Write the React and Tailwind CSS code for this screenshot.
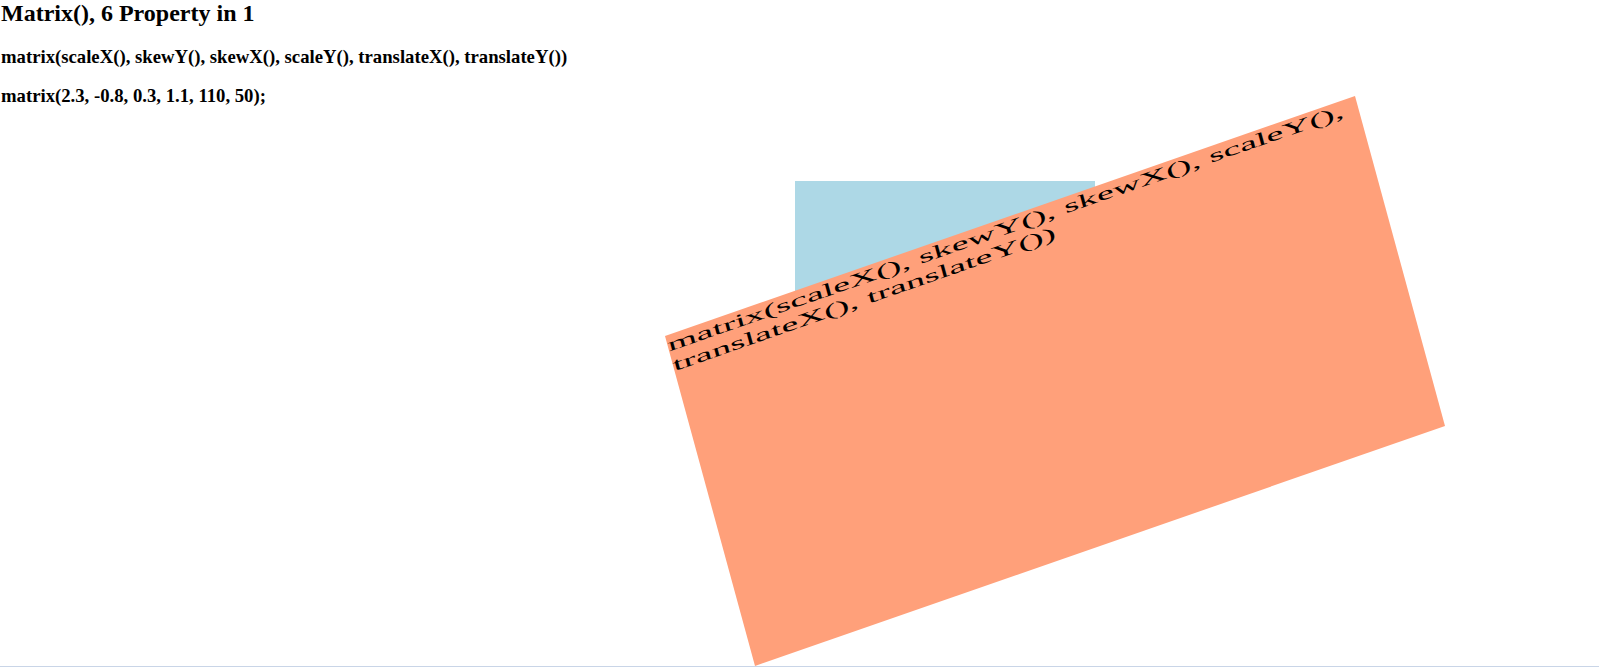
import React from 'react'

const App = () => {
  return (
    <div className="h-[667px] overflow-hidden border-b border-[#c9d5e7] bg-white pl-px font-['Liberation_Serif','Times_New_Roman',serif] text-black">
      <h2 className="text-[24px] font-bold leading-[normal]">Matrix(), 6 Property in 1</h2>
      <h3 className="mt-[19px] text-[18.72px] font-bold leading-[normal]">
        matrix(scaleX(), skewY(), skewX(), scaleY(), translateX(), translateY())
      </h3>
      <h3 className="mt-[17px] text-[18.72px] font-bold leading-[normal]">
        matrix(2.3, -0.8, 0.3, 1.1, 110, 50);
      </h3>

      {/* box + transformed box */}
      <div className="ml-[794px] mt-[73.5px] h-[300px] w-[300px] bg-[#add8e6]">
        <div className="h-full w-full bg-[#ffa07a] text-[16px] font-normal leading-[normal] [transform:matrix(2.3,-0.8,0.3,1.1,110,50)]">
          matrix(scaleX(), skewY(), skewX(), scaleY(), translateX(), translateY())
        </div>
      </div>
    </div>
  )
}

export default App
